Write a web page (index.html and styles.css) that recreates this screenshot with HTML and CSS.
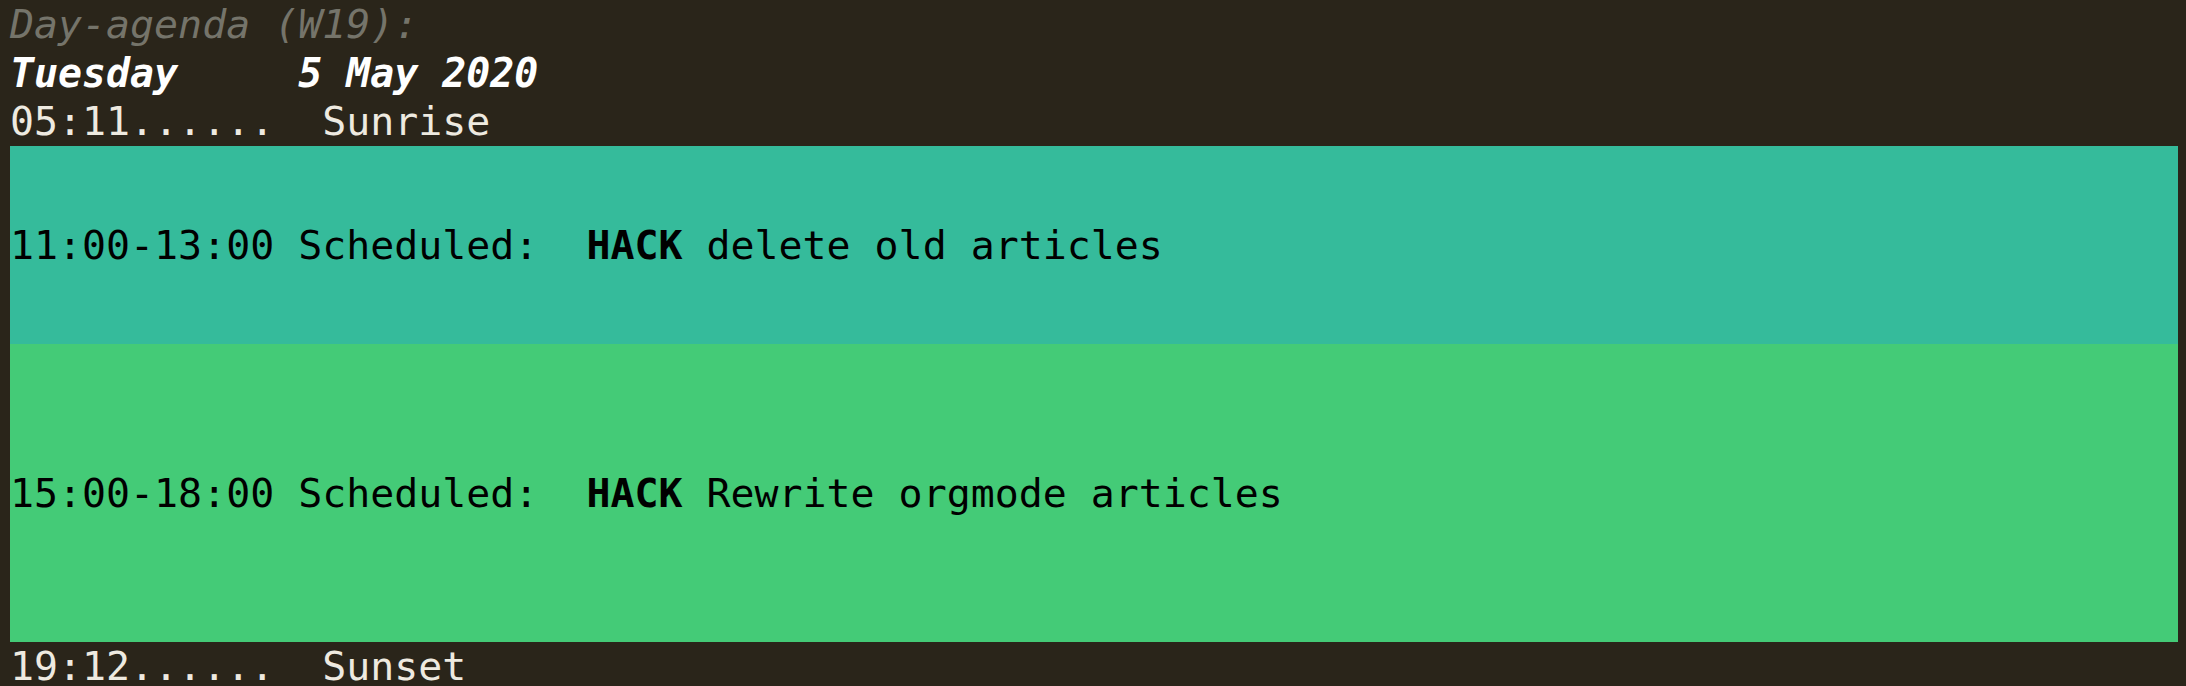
FILE: index.html
```html
<!DOCTYPE html>
<html>
<head>
<meta charset="utf-8">
<link rel="stylesheet" href="styles.css">
</head>
<body>
<div class="agenda">
  <div class="line title">Day-agenda (W19):</div>
  <div class="line date">Tuesday     5 May 2020</div>
  <div class="line">05:11......  Sunrise</div>
  <div class="block block-teal"><span class="line">11:00-13:00 Scheduled:  <b class="kw">HACK</b> delete old articles</span></div>
  <div class="block block-green"><span class="line">15:00-18:00 Scheduled:  <b class="kw">HACK</b> Rewrite orgmode articles</span></div>
  <div class="line">19:12......  Sunset</div>
</div>
</body>
</html>
```
FILE: styles.css
```css
html, body {
  margin: 0;
  padding: 0;
  background: #2a251a;
}
body {
  width: 2186px;
  height: 686px;
  overflow: hidden;
}
.agenda {
  padding: 0 8px 0 10px;
  font-family: "DejaVu Sans Mono", "Liberation Mono", monospace;
  font-size: 39.9px;
  color: #eeeae0;
}
.line {
  display: block;
  white-space: pre;
  line-height: 48.67px;
  height: 48.67px;
}
.title {
  font-style: italic;
  color: #75746a;
}
.date {
  font-style: italic;
  font-weight: bold;
  color: #ffffff;
}
.block {
  display: flex;
  align-items: center;
  color: #000000;
}
.block-teal {
  height: 198px;
  background: #35bb9b;
}
.block-green {
  height: 298px;
  background: #44cb77;
}
.kw {
  font-weight: bold;
}
```
